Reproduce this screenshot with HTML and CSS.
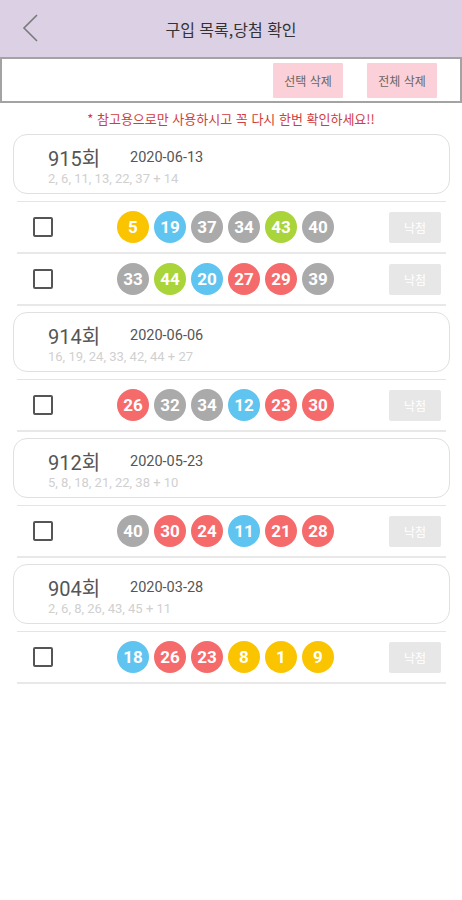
FILE: index.html
```html
<!DOCTYPE html>
<html lang="ko">
<head>
<meta charset="utf-8">
<link rel="stylesheet" href="styles.css">
</head>
<body>
<header class="appbar">
  <svg class="back" width="20" height="30" viewBox="0 0 20 30"><polyline points="16,2 3,15 16,28" fill="none" stroke="#7a7a7a" stroke-width="1.6"/></svg>
  <h1 class="title">구입 목록,당첨 확인</h1>
</header>
<div class="toolbar">
  <button class="pink-btn">선택 삭제</button>
  <button class="pink-btn">전체 삭제</button>
</div>
<p class="warning">* 참고용으로만 사용하시고 꼭 다시 한번 확인하세요!!</p>

<section class="group">
  <div class="card">
    <div class="card-head"><span class="round">915회</span><span class="date">2020-06-13</span></div>
    <div class="win">2, 6, 11, 13, 22, 37 + 14</div>
  </div>
  <div class="sep"></div>
  <div class="row">
    <span class="check"></span>
    <div class="balls"><span class="ball y">5</span><span class="ball b">19</span><span class="ball g">37</span><span class="ball g">34</span><span class="ball gr">43</span><span class="ball g">40</span></div>
    <span class="result">낙첨</span>
  </div>
  <div class="row">
    <span class="check"></span>
    <div class="balls"><span class="ball g">33</span><span class="ball gr">44</span><span class="ball b">20</span><span class="ball r">27</span><span class="ball r">29</span><span class="ball g">39</span></div>
    <span class="result">낙첨</span>
  </div>
</section>

<section class="group">
  <div class="card">
    <div class="card-head"><span class="round">914회</span><span class="date">2020-06-06</span></div>
    <div class="win">16, 19, 24, 33, 42, 44 + 27</div>
  </div>
  <div class="sep"></div>
  <div class="row">
    <span class="check"></span>
    <div class="balls"><span class="ball r">26</span><span class="ball g">32</span><span class="ball g">34</span><span class="ball b">12</span><span class="ball r">23</span><span class="ball r">30</span></div>
    <span class="result">낙첨</span>
  </div>
</section>

<section class="group">
  <div class="card">
    <div class="card-head"><span class="round">912회</span><span class="date">2020-05-23</span></div>
    <div class="win">5, 8, 18, 21, 22, 38 + 10</div>
  </div>
  <div class="sep"></div>
  <div class="row">
    <span class="check"></span>
    <div class="balls"><span class="ball g">40</span><span class="ball r">30</span><span class="ball r">24</span><span class="ball b">11</span><span class="ball r">21</span><span class="ball r">28</span></div>
    <span class="result">낙첨</span>
  </div>
</section>

<section class="group">
  <div class="card">
    <div class="card-head"><span class="round">904회</span><span class="date">2020-03-28</span></div>
    <div class="win">2, 6, 8, 26, 43, 45 + 11</div>
  </div>
  <div class="sep"></div>
  <div class="row">
    <span class="check"></span>
    <div class="balls"><span class="ball b">18</span><span class="ball r">26</span><span class="ball r">23</span><span class="ball y">8</span><span class="ball y">1</span><span class="ball y">9</span></div>
    <span class="result">낙첨</span>
  </div>
</section>
</body>
</html>
```

FILE: styles.css
```css
* { box-sizing: border-box; }
body {
  margin: 0;
  background: #fff;
  font-family: Roboto, "Noto Sans CJK KR", sans-serif;
  width: 462px;
}
.appbar {
  height: 57px;
  background: #dcd0e4;
  display: flex;
  align-items: center;
  justify-content: center;
  position: relative;
}
.back {
  position: absolute;
  left: 21px;
  top: 13px;
}
.title {
  margin: 0;
  font-family: "Noto Sans CJK KR", sans-serif;
  font-size: 16px;
  font-weight: 400;
  color: #333;
}
.toolbar {
  height: 46px;
  border: 2px solid #a3a3a3;
  display: flex;
  align-items: center;
  justify-content: flex-end;
  gap: 24px;
  padding-right: 23px;
}
.pink-btn {
  width: 70px;
  height: 35px;
  border: none;
  background: #fcd0d9;
  color: #666;
  font-family: "Noto Sans CJK KR", sans-serif;
  font-size: 12px;
  padding: 0;
  border-radius: 1px;
}
.warning {
  margin: 0;
  padding: 8px 0 1px;
  line-height: 16px;
  text-align: center;
  font-family: "Noto Sans CJK KR", sans-serif;
  font-size: 13px;
  color: #d23c3e;
}
.group { padding-top: 6px; }
.card {
  margin: 0 12px 0 13px;
  height: 60px;
  border: 1px solid #e0e0e0;
  border-radius: 14px;
  padding: 9px 0 0 34px;
}
.card-head {
  display: flex;
  align-items: center;
  height: 26px;
}
.round {
  font-size: 20px;
  color: #555;
  font-family: Roboto, "Noto Sans CJK KR", sans-serif;
  width: 82px;
}
.date {
  font-size: 14.5px;
  color: #555;
}
.win {
  font-size: 13px;
  color: #d0d0d0;
  line-height: 18px;
}
.sep {
  margin: 7px 16px 0 17px;
  height: 1px;
  background: #e4e4e4;
}
.row {
  margin: 0 16px 0 17px;
  height: 52px;
  border-bottom: 2px solid #e8e8e8;
  display: flex;
  align-items: center;
  padding-right: 5px;
}
.check {
  width: 20px;
  height: 20px;
  border: 2px solid #555;
  border-radius: 2px;
  margin-left: 16px;
}
.balls {
  display: flex;
  gap: 5px;
  margin-left: 64px;
}
.ball {
  width: 32px;
  height: 32px;
  border-radius: 50%;
  display: flex;
  align-items: center;
  justify-content: center;
  color: #fff;
  font-weight: 700;
  font-size: 17px;
}
.y { background: #fbc400; }
.b { background: #5fc4f0; }
.g { background: #aaaaaa; }
.r { background: #f56b6b; }
.gr { background: #a9d43a; }
.result {
  margin-left: auto;
  width: 52px;
  height: 31px;
  background: #e7e7e7;
  color: #fff;
  font-family: "Noto Sans CJK KR", sans-serif;
  font-size: 12px;
  display: flex;
  align-items: center;
  justify-content: center;
  border-radius: 2px;
}
```
